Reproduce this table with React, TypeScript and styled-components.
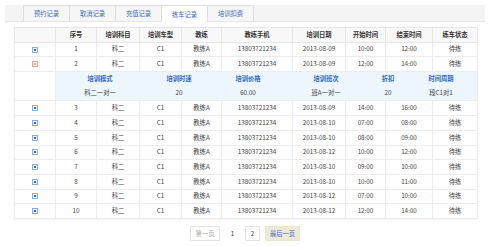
import React from 'react';
import styled, { createGlobalStyle } from 'styled-components';

const GlobalStyle = createGlobalStyle`
  html, body {
    margin: 0;
    padding: 0;
    background: #fff;
  }
  body {
    font-family: "Noto Sans CJK SC", "Noto Sans", sans-serif;
    font-size: 6.3px;
    color: #444;
  }
`;

const tabs = ['预约记录', '取消记录', '充值记录', '练车记录', '培训扣费'];
const activeTab = 3;

const colWidths = [41, 41, 43, 42, 40, 71, 53, 40, 47, 45];
const headers = ['', '序号', '培训科目', '培训车型', '教练', '教练手机', '培训日期', '开始时间', '结束时间', '练车状态'];

const rows = [
  ['2013-08-09', '10:00', '12:00'],
  ['2013-08-09', '12:00', '14:00'],
  ['2013-08-09', '14:00', '16:00'],
  ['2013-08-10', '07:00', '08:00'],
  ['2013-08-10', '08:00', '09:00'],
  ['2013-08-12', '10:00', '12:00'],
  ['2013-08-10', '09:00', '10:00'],
  ['2013-08-10', '10:00', '11:00'],
  ['2013-08-12', '07:00', '10:00'],
  ['2013-08-12', '12:00', '14:00'],
];

const detail = [
  ['培训模式', '科二一对一'],
  ['培训时速', '20'],
  ['培训价格', '60.00'],
  ['培训班次', '班A一对一'],
  ['折扣', '20'],
  ['时间周期', '段C1对1'],
];

const openRow = 1;

export default function App() {
  return (
    <>
      <GlobalStyle />
      <Page>
        <TabBar>
          {tabs.map((t, i) => (
            <Tab key={t} active={i === activeTab}>
              {t}
            </Tab>
          ))}
        </TabBar>

        <TableWrap>
          <Table>
            <colgroup>
              {colWidths.map((w, i) => (
                <col key={i} style={{ width: w }} />
              ))}
            </colgroup>
            <thead>
              <tr>
                {headers.map((h, i) => (
                  <Th key={i}>{h}</Th>
                ))}
              </tr>
            </thead>
            <tbody>
              {rows.map((r, idx) => (
                <React.Fragment key={idx}>
                  <tr>
                    <Td>
                      <ToggleIcon open={idx === openRow} />
                    </Td>
                    <Td>{idx + 1}</Td>
                    <Td>科二</Td>
                    <Td>C1</Td>
                    <Td>教练A</Td>
                    <Td>13803721234</Td>
                    <Td>{r[0]}</Td>
                    <Td>{r[1]}</Td>
                    <Td>{r[2]}</Td>
                    <Td>待练</Td>
                  </tr>
                  {idx === openRow && (
                    <tr>
                      <BlankCell />
                      <DetailCell colSpan={9}>
                        <DetailGrid>
                          {detail.map(d => (
                            <DetailLabel key={d[0]}>{d[0]}</DetailLabel>
                          ))}
                          {detail.map(d => (
                            <DetailValue key={d[0]}>{d[1]}</DetailValue>
                          ))}
                        </DetailGrid>
                      </DetailCell>
                    </tr>
                  )}
                </React.Fragment>
              ))}
            </tbody>
          </Table>
        </TableWrap>

        <Pager>
          <PageButton disabled>第一页</PageButton>
          <PageNum>1</PageNum>
          <PageNum boxed>2</PageNum>
          <PageButton last>最后一页</PageButton>
        </Pager>
      </Page>
    </>
  );
}

function ToggleIcon({ open }: { open: boolean }) {
  if (open) {
    return (
      <Icon width="6" height="6" viewBox="0 0 6 6">
        <rect x="0.5" y="0.5" width="5" height="5" fill="#fff5f0" stroke="#eba78f" />
        <rect x="1.7" y="2.6" width="2.6" height="0.9" fill="#e0683f" />
      </Icon>
    );
  }
  return (
    <Icon width="6" height="6" viewBox="0 0 6 6">
      <rect x="0.5" y="0.5" width="5" height="5" fill="#f3f8fe" stroke="#84aee0" />
      <rect x="2" y="2" width="2" height="2" fill="#2f6fc4" />
    </Icon>
  );
}

const Page = styled.div`
  padding: 5px 6px 0 5px;
`;

const TabBar = styled.div`
  display: flex;
  align-items: flex-end;
  height: 17px;
  padding-left: 18px;
  background: #f4f4f4;
  border-bottom: 1px solid #e6e6e6;
  box-sizing: border-box;
`;

const Tab = styled.div<{ active?: boolean }>`
  width: 47px;
  box-sizing: border-box;
  display: flex;
  align-items: center;
  justify-content: center;
  border: 1px solid #dedede;
  border-bottom: none;
  margin-right: -1px;
  margin-bottom: ${p => (p.active ? '-1px' : '0')};
  height: ${p => (p.active ? '17px' : '16px')};
  background: ${p => (p.active ? '#fff' : '#f6f6f6')};
  color: #3d6bbf;
`;

const TableWrap = styled.div`
  margin: 5px 8px 0 9px;
  box-shadow: 0 1px 2px rgba(0, 0, 0, 0.06);
`;

const Table = styled.table`
  width: 463px;
  table-layout: fixed;
  border-collapse: collapse;
  border: 1px solid #e4e4e4;
`;

const Th = styled.th`
  height: 13.7px;
  padding: 0;
  text-align: center;
  font-weight: bold;
  color: #333;
  background: #f8f8f8;
  border: 1px solid #e6e6e6;
  line-height: 1;
`;

const Td = styled.td`
  height: 13.7px;
  padding: 0;
  text-align: center;
  color: #444;
  border: 1px solid #ececec;
  line-height: 1;
  white-space: nowrap;
`;

const BlankCell = styled.td`
  padding: 0;
  border: 1px solid #ececec;
`;

const DetailCell = styled.td`
  padding: 0;
  background: #edf5fd;
  border: 1px solid #ececec;
`;

const DetailGrid = styled.div`
  display: grid;
  grid-template-columns: 88px 70px 68px 88px 36px 70px;
  grid-template-rows: 14.2px 14.2px;
  align-items: center;
  text-align: center;
  line-height: 1;
`;

const DetailLabel = styled.div`
  color: #2f68bd;
  font-weight: bold;
`;

const DetailValue = styled.div`
  color: #444;
`;

const Icon = styled.svg`
  display: block;
  margin: 0 auto;
`;

const Pager = styled.div`
  display: flex;
  justify-content: center;
  align-items: center;
  gap: 5px;
  margin-top: 7px;
`;

const PageButton = styled.div<{ disabled?: boolean; last?: boolean }>`
  height: 15px;
  box-sizing: border-box;
  display: flex;
  align-items: center;
  justify-content: center;
  width: ${p => (p.last ? '35px' : '30px')};
  border: 1px solid ${p => (p.last ? '#ebe5d3' : '#e3e3e3')};
  background: ${p => (p.last ? '#efe9d8' : '#fff')};
  color: ${p => (p.disabled ? '#aaa' : '#3d6bbf')};
`;

const PageNum = styled.div<{ boxed?: boolean }>`
  width: 15px;
  height: 15px;
  box-sizing: border-box;
  display: flex;
  align-items: center;
  justify-content: center;
  border: 1px solid ${p => (p.boxed ? '#e3e3e3' : 'transparent')};
  color: #444;
`;
